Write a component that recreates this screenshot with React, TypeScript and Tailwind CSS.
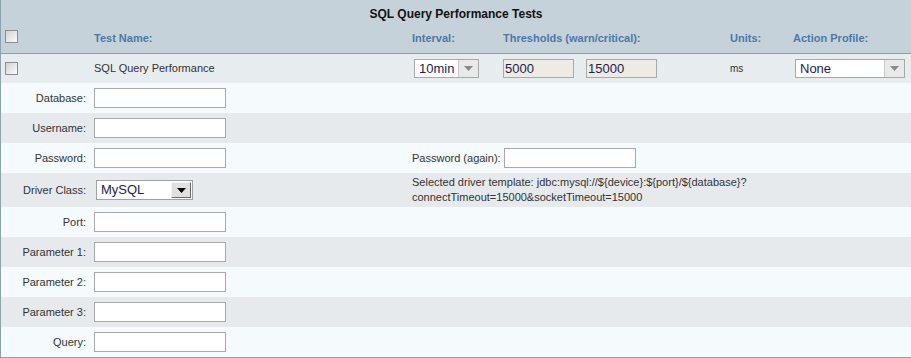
import React from "react";

function Checkbox() {
  return (
    <div className="w-[13px] h-[13px] border border-[#8e8e8e] bg-gradient-to-br from-[#d2d2d2] to-[#fbfbfb] shrink-0" />
  );
}

function FlatSelect({ value, width }: { value: string; width: number }) {
  return (
    <div
      className="h-[19px] border border-[#a8a8a8] bg-white flex items-stretch"
      style={{ width }}
    >
      <div className="flex-1 pl-[4px] text-[13px] leading-[17px] text-[#1c1c50]">{value}</div>
      <div className="w-[20px] bg-[#e9e9e9] border-l border-[#c8c8c8] flex items-center justify-center">
        <svg width="9" height="5" viewBox="0 0 9 5">
          <path d="M0 0 L9 0 L4.5 5 Z" fill="#8a8a8a" />
        </svg>
      </div>
    </div>
  );
}

function ClassicSelect({ value }: { value: string }) {
  return (
    <div className="w-[97px] h-[20px] border border-[#a0a0a0] bg-white flex items-stretch">
      <div className="flex-1 pl-[4px] text-[13px] leading-[18px] text-[#1c1c50]">{value}</div>
      <div className="w-[20px] my-[1px] mr-[1px] bg-[#e0e0e0] border border-t-[#f4f4f4] border-l-[#f4f4f4] border-r-[#6a6a6a] border-b-[#6a6a6a] flex items-center justify-center">
        <svg width="9" height="5" viewBox="0 0 9 5">
          <path d="M0 0 L9 0 L4.5 5 Z" fill="#000" />
        </svg>
      </div>
    </div>
  );
}

function TextInput({ w = 132 }: { w?: number }) {
  return <div className="h-[20px] border border-[#a9a9a9] bg-white" style={{ width: w }} />;
}

function FormRow({
  label,
  children,
  right,
  alt,
  tall,
}: {
  label: string;
  children?: React.ReactNode;
  right?: React.ReactNode;
  alt?: boolean;
  tall?: boolean;
}) {
  return (
    <div
      className={`flex items-center ${tall ? "h-[34px]" : "h-[30px]"} ${
        alt ? "bg-[#e6eaed]" : "bg-[#f5fafd]"
      }`}
    >
      <div className="w-[85px] text-right text-[11px] text-[#333]">{label}</div>
      <div className="ml-[8px] w-[318px] flex items-center">{children}</div>
      <div className="flex-1 flex items-center">{right}</div>
    </div>
  );
}

export default function App() {
  return (
    <div
      className="w-[911px] h-[358px] border-l border-b border-[#8ea1ad] bg-[#f5fafd] overflow-hidden"
      style={{ fontFamily: '"Liberation Sans", Arial, sans-serif' }}
    >
      {/* Header */}
      <div className="bg-[#c6d2da] border-b border-[#8d9fab]">
        <div className="h-[27px] flex items-center justify-center text-[12px] font-bold text-[#111]">
          SQL Query Performance Tests
        </div>
        <div className="h-[26px] flex items-start text-[11px] font-bold text-[#4b79a7]">
          <div className="w-[93px] pl-[4px] pt-[3px]">
            <Checkbox />
          </div>
          <div className="w-[318px] pt-[4px] leading-[14px]">Test Name:</div>
          <div className="w-[91px] pt-[4px] leading-[14px]">Interval:</div>
          <div className="w-[227px] pt-[4px] leading-[14px]">Thresholds (warn/critical):</div>
          <div className="w-[63px] pt-[4px] leading-[14px]">Units:</div>
          <div className="flex-1 pt-[4px] leading-[14px]">Action Profile:</div>
        </div>
      </div>

      {/* Test row */}
      <div className="h-[29px] bg-[#e7ecef] flex items-center text-[11px] text-[#333]">
        <div className="w-[93px] pl-[4px]">
          <Checkbox />
        </div>
        <div className="w-[318px]">SQL Query Performance</div>
        <div className="w-[91px] pl-[2px]">
          <FlatSelect value="10min" width={65} />
        </div>
        <div className="w-[227px] flex items-center">
          <div className="w-[71px] h-[19px] border border-[#a9a9a9] bg-[#ecebe4] pl-[1px] text-[13px] leading-[17px] text-[#1c1c50]">
            5000
          </div>
          <div className="ml-[12px] w-[71px] h-[19px] border border-[#a9a9a9] bg-[#ecebe4] pl-[1px] text-[13px] leading-[17px] text-[#1c1c50]">
            15000
          </div>
        </div>
        <div className="w-[63px] text-[10px]">ms</div>
        <div className="flex-1 pl-[2px]">
          <FlatSelect value="None" width={110} />
        </div>
      </div>

      <FormRow label="Database:">
        <TextInput />
      </FormRow>
      <FormRow label="Username:" alt>
        <TextInput />
      </FormRow>
      <FormRow
        label="Password:"
        right={
          <>
            <div className="w-[92px] text-[11px] text-[#333]">Password (again):</div>
            <TextInput />
          </>
        }
      >
        <TextInput />
      </FormRow>
      <FormRow
        label="Driver Class:"
        alt
        tall
        right={
          <div className="text-[11px] leading-[15px] text-[#333]">
            Selected driver template: jdbc:mysql://${"{device}"}:${"{port}"}/${"{database}"}?
            <br />
            connectTimeout=15000&amp;socketTimeout=15000
          </div>
        }
      >
        <div className="ml-[2px]">
          <ClassicSelect value="MySQL" />
        </div>
      </FormRow>
      <FormRow label="Port:">
        <TextInput />
      </FormRow>
      <FormRow label="Parameter 1:" alt>
        <TextInput />
      </FormRow>
      <FormRow label="Parameter 2:">
        <TextInput />
      </FormRow>
      <FormRow label="Parameter 3:" alt>
        <TextInput />
      </FormRow>
      <FormRow label="Query:">
        <TextInput />
      </FormRow>
    </div>
  );
}
